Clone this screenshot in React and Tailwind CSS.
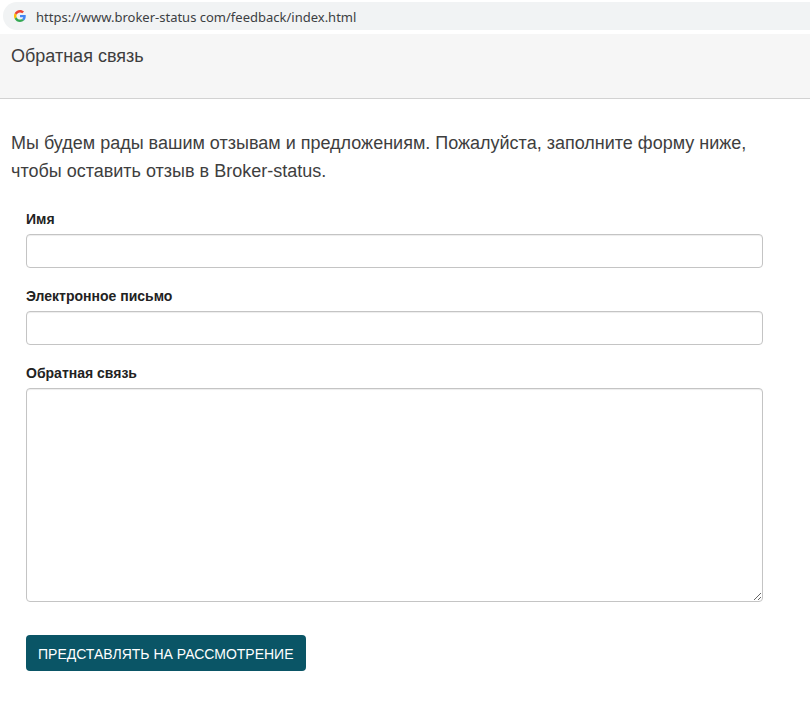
import { useState } from "react";

const PAGE_URL = "https://www.broker-status com/feedback/index.html";

const FIELD_CLASS =
  "block w-full rounded border border-[#c4c4c4] bg-white px-3 text-sm text-[#555555] shadow-[inset_0_1px_1px_rgba(0,0,0,0.075)] outline-none focus:border-[#0a5566]";

function GoogleIcon() {
  return (
    <svg viewBox="0 0 48 48" className="size-3 shrink-0" aria-hidden="true">
      <path
        fill="#EA4335"
        d="M24 9.5c3.54 0 6.71 1.22 9.21 3.6l6.85-6.85C35.9 2.38 30.47 0 24 0 14.62 0 6.51 5.38 2.56 13.22l7.98 6.19C12.43 13.72 17.74 9.5 24 9.5z"
      />
      <path
        fill="#4285F4"
        d="M46.98 24.55c0-1.57-.15-3.09-.38-4.55H24v9.02h12.94c-.58 2.96-2.26 5.48-4.78 7.18l7.73 6c4.51-4.18 7.09-10.36 7.09-17.65z"
      />
      <path
        fill="#FBBC05"
        d="M10.53 28.59c-.48-1.45-.76-2.99-.76-4.59s.27-3.14.76-4.59l-7.98-6.19C.92 16.46 0 20.12 0 24c0 3.88.92 7.54 2.56 10.78l7.97-6.19z"
      />
      <path
        fill="#34A853"
        d="M24 48c6.48 0 11.93-2.13 15.89-5.81l-7.73-6c-2.15 1.45-4.92 2.3-8.16 2.3-6.26 0-11.57-4.22-13.47-9.91l-7.98 6.19C6.51 42.62 14.62 48 24 48z"
      />
    </svg>
  );
}

function AddressBar() {
  return (
    <div className="bg-white pt-[2px] pb-1 pl-[3px]">
      <div className="flex h-7 items-center gap-[10px] rounded-l-full bg-[#f1f3f4] pl-[11px]">
        <GoogleIcon />
        <input
          type="text"
          aria-label="URL"
          readOnly
          value={PAGE_URL}
          className="h-full min-w-0 flex-1 bg-transparent pt-[2px] font-['Noto_Sans',sans-serif] text-[13px] text-[#3c4043] outline-none"
        />
      </div>
    </div>
  );
}

function Field({ id, label, children }) {
  return (
    <div className="mb-[18px]">
      <label htmlFor={id} className="mb-[5px] block text-sm font-bold text-[#222222]">
        {label}
      </label>
      {children}
    </div>
  );
}

export default function App() {
  const [form, setForm] = useState({ name: "", email: "", feedback: "" });

  const update = (e) => setForm({ ...form, [e.target.name]: e.target.value });

  return (
    <div className="min-h-screen bg-white font-['Liberation_Sans',Arial,sans-serif] text-[#3e3e3e]">
      <AddressBar />

      <header className="border-b border-[#d2d2d2] bg-[#f6f6f6] px-[11px] pt-2 pb-7">
        <h1 className="text-lg">Обратная связь</h1>
      </header>

      <main className="px-[11px] pt-[30px] pb-8">
        <p className="text-lg">
          Мы будем рады вашим отзывам и предложениям. Пожалуйста, заполните форму ниже, чтобы
          оставить отзыв в Broker-status.
        </p>

        <form
          onSubmit={(e) => e.preventDefault()}
          className="mt-6 mr-9 ml-[15px]"
        >
          <Field id="name" label="Имя">
            <input
              id="name"
              name="name"
              type="text"
              value={form.name}
              onChange={update}
              className={`${FIELD_CLASS} h-[34px]`}
            />
          </Field>

          <Field id="email" label="Электронное письмо">
            <input
              id="email"
              name="email"
              type="email"
              value={form.email}
              onChange={update}
              className={`${FIELD_CLASS} h-[34px]`}
            />
          </Field>

          <Field id="feedback" label="Обратная связь">
            <textarea
              id="feedback"
              name="feedback"
              value={form.feedback}
              onChange={update}
              className={`${FIELD_CLASS} h-[214px] resize py-2`}
            />
          </Field>

          <button
            type="submit"
            className="mt-[15px] h-9 rounded bg-[#0a5566] px-3 pt-px text-sm text-white uppercase hover:bg-[#084350]"
          >
            Представлять на рассмотрение
          </button>
        </form>
      </main>
    </div>
  );
}
